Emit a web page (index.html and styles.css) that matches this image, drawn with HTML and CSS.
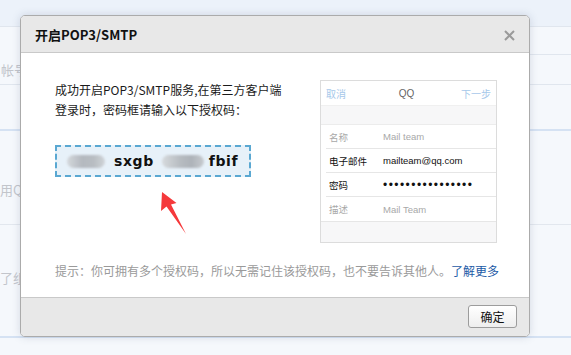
FILE: index.html
```html
<!DOCTYPE html>
<html lang="zh-CN">
<head>
<meta charset="utf-8">
<title>开启POP3/SMTP</title>
<link rel="stylesheet" href="styles.css">
</head>
<body>
<div class="page">
  <div class="topbar"></div>
  <div class="row row-a">
    <div class="sub-line"></div>
    <span class="label label-a">帐号</span>
  </div>
  <div class="row row-b"></div>
  <div class="row row-c"><span class="label label-c">用QQ</span></div>
  <div class="row row-d"><span class="label label-d">了组成</span></div>
</div>

<div class="dialog">
  <div class="dlg-head">
    <span class="dlg-title">开启POP3/SMTP</span>
    <svg class="dlg-close" width="11" height="11" viewBox="0 0 11 11"><path d="M1 1L10 10M10 1L1 10" stroke="#9a9a9a" stroke-width="2"/></svg>
  </div>
  <div class="dlg-body">
    <div class="main">
      <div class="left">
        <p class="intro">成功开启POP3/SMTP服务,在第三方客户端<br>登录时，密码框请输入以下授权码：</p>
        <div class="code">
          <span class="blob blob1"></span>
          <span class="code-txt">sxgb</span>
          <span class="blob blob2"></span>
          <span class="code-txt">fbif</span>
        </div>
        <svg class="arrow" width="32" height="46" viewBox="158 190 32 46">
          <polygon points="162,192 176.5,203 171,204.5 186,234 166.5,206.5 161,211" fill="#f5393b"/>
        </svg>
      </div>
      <div class="phone">
        <div class="ph-head">
          <span class="ph-link">取消</span>
          <span class="ph-title">QQ</span>
          <span class="ph-link">下一步</span>
        </div>
        <div class="ph-gap"></div>
        <div class="ph-row muted"><span class="ph-k">名称</span><span class="ph-v">Mail team</span></div>
        <div class="ph-row"><span class="ph-k">电子邮件</span><span class="ph-v">mailteam@qq.com</span></div>
        <div class="ph-row"><span class="ph-k">密码</span><span class="ph-v dots">••••••••••••••••</span></div>
        <div class="ph-row muted last"><span class="ph-k">描述</span><span class="ph-v">Mail Team</span></div>
        <div class="ph-foot"></div>
      </div>
    </div>
    <p class="tip">提示：你可拥有多个授权码，所以无需记住该授权码，也不要告诉其他人。<a class="more" href="#">了解更多</a></p>
  </div>
  <div class="dlg-foot">
    <button class="btn">确定</button>
  </div>
</div>
</body>
</html>
```

FILE: styles.css
```css
* { box-sizing: border-box; }
html, body { margin: 0; padding: 0; }
body {
  width: 571px;
  height: 355px;
  overflow: hidden;
  background: #f5f8fc;
  font-family: "Noto Sans CJK SC", "Noto Sans", sans-serif;
  position: relative;
}

/* background page */
.page { width: 100%; }
.topbar { height: 27px; background: #ecf2fa; border-bottom: 1px solid #e0e6ee; }
.row { position: relative; overflow: hidden; }
.row-a { height: 58px; border-bottom: 1px solid #e0e6ee; }
.sub-line { margin-left: 300px; height: 28px; border-bottom: 1px solid #e0e6ee; }
.row-b { height: 46px; border-bottom: 2px solid #d5e2f3; }
.row-c { height: 94px; border-bottom: 1px solid #e2e7ee; }
.row-d { height: 113px; border-bottom: 2px solid #d5e2f3; }
.label {
  display: block;
  font-size: 13px;
  line-height: 18px;
  color: #c2c5cb;
  white-space: nowrap;
}
.label-a { margin: 6px 0 0 1px; }
.label-c { margin: 50px 0 0 0; }
.label-d { margin: 44px 0 0 0; }

/* dialog */
.dialog {
  position: absolute;
  left: 20px;
  top: 15px;
  width: 510px;
  height: 322px;
  border: 1px solid #ababab;
  border-radius: 5px;
  background: #fff;
  box-shadow: 0 0 9px rgba(60, 80, 110, 0.18);
  display: flex;
  flex-direction: column;
  overflow: hidden;
}
.dlg-head {
  height: 37px;
  flex: none;
  background: #e8e8e8;
  border-bottom: 1px solid #c9c9c9;
  display: flex;
  align-items: center;
  justify-content: space-between;
  padding: 0 14px 0 14px;
}
.dlg-title {
  font-size: 13px;
  font-weight: bold;
  color: #111;
  line-height: 18px;
  padding-top: 1px;
}
.dlg-close { display: block; margin-top: 2px; }

.dlg-body {
  flex: 1;
  padding: 27px 32px 0 34px;
}
.main {
  display: flex;
  justify-content: space-between;
  align-items: flex-start;
}
.left { display: flex; flex-direction: column; align-items: flex-start; }
.intro {
  margin: 0;
  font-size: 12px;
  line-height: 20px;
  color: #1a1a1a;
}
.code {
  margin-top: 25px;
  width: 196px;
  height: 32px;
  border: 2px dashed #5aa8d2;
  background: #e7f1f9;
  display: flex;
  align-items: center;
  padding-left: 10px;
}
.blob {
  display: block;
  height: 13px;
  border-radius: 7px;
  background: linear-gradient(90deg, #d4d8dc 0%, #b4b9bf 40%, #b8bdc2 70%, #d0d4d8 100%);
  filter: blur(1px);
}
.blob1 { width: 38px; margin-right: 9px; }
.blob2 { width: 42px; margin: 0 5px 0 8px; background: linear-gradient(90deg, #d6dadd 0%, #b6bbc0 45%, #aeb3b9 70%, #c7cbcf 100%); }
.code-txt {
  font-family: "DejaVu Sans", "Liberation Sans", sans-serif;
  font-weight: bold;
  font-size: 14px;
  letter-spacing: 0.6px;
  color: #111;
  line-height: 16px;
  padding-bottom: 1px;
}
.arrow { display: block; margin: 13px 0 0 103px; }

/* phone mock */
.phone {
  width: 177px;
  height: 163px;
  border: 1px solid #dcdcdc;
  display: flex;
  flex-direction: column;
  font-size: 9.5px;
  font-family: "Noto Sans CJK SC", "Liberation Sans", sans-serif;
}
.ph-head {
  height: 25px;
  flex: none;
  display: flex;
  justify-content: space-between;
  align-items: center;
  padding: 0 5px 0 5px;
  border-bottom: 1px solid #f0f0f0;
}
.ph-link { color: #a6c8ea; font-size: 10px; }
.ph-title { color: #666; font-family: "Liberation Sans", sans-serif; margin-left: 6px; font-size: 10px; }
.ph-gap { height: 19px; flex: none; background: #f7f7f8; border-bottom: 1px solid #ececec; }
.ph-row {
  height: 24px;
  flex: none;
  margin-left: 5px;
  border-bottom: 1px solid #e6e6e6;
  display: flex;
  align-items: center;
  color: #111;
}
.ph-row.last { border-bottom: none; }
.ph-row.muted { color: #a8a8a8; }
.ph-k { width: 57px; padding-left: 3px; flex: none; }
.ph-v { font-family: "Liberation Sans", sans-serif; font-size: 9.5px; }
.ph-v.dots { font-size: 12px; letter-spacing: 1.45px; line-height: 12px; }
.ph-foot { flex: 1; background: #f7f7f8; border-top: 1px solid #e6e6e6; }

.tip {
  margin: 19px 0 0 0;
  font-size: 12px;
  line-height: 18px;
  color: #9a9a9a;
  white-space: nowrap;
}
.more { color: #1c5aa6; text-decoration: none; }

.dlg-foot {
  height: 39px;
  flex: none;
  background: #e8e8e8;
  border-top: 1px solid #c9c9c9;
  display: flex;
  justify-content: flex-end;
  padding: 7px 12px 0 0;
  align-items: flex-start;
}
.btn {
  width: 49px;
  height: 23px;
  border: 1px solid #9c9c9c;
  border-radius: 3px;
  background: linear-gradient(#ffffff, #eeeeee);
  font-family: "Noto Sans CJK SC", sans-serif;
  font-size: 12px;
  color: #111;
  padding: 0;
  line-height: 20px;
}
```
